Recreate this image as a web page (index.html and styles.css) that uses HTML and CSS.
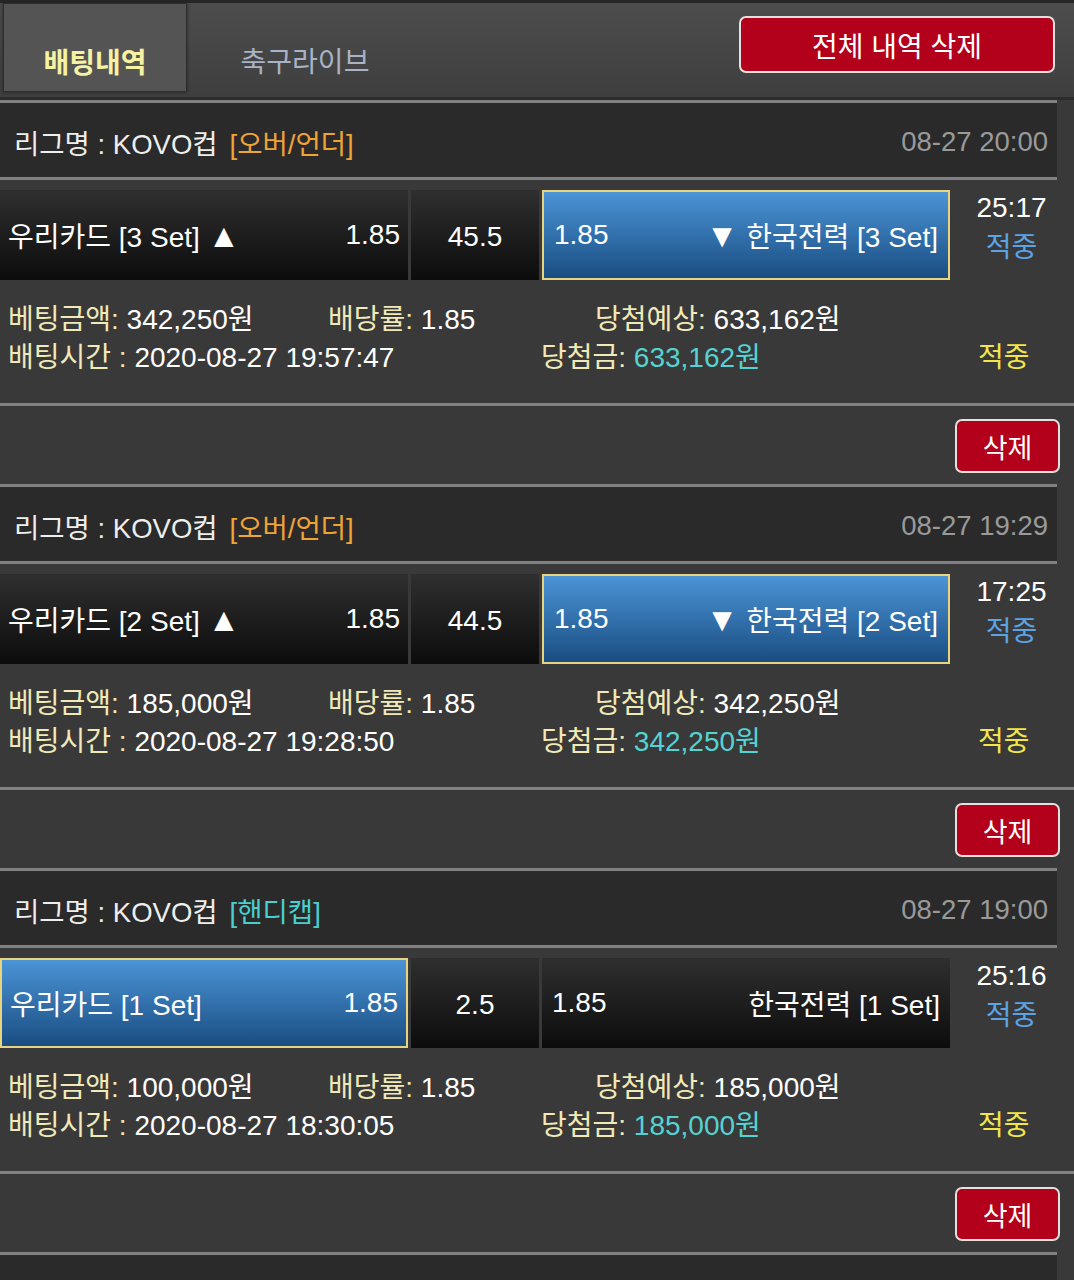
FILE: index.html
```html
<!DOCTYPE html>
<html lang="ko">
<head>
    <meta charset="UTF-8">
    <meta name="viewport" content="width=device-width, initial-scale=1.0">
    <title>배팅내역</title>
    <link rel="stylesheet" href="styles.css">
</head>
<body>
    <div class="topbar">
        <div class="tab active">배팅내역</div>
        <div class="tab">축구라이브</div>
        <button class="btn-clear">전체 내역 삭제</button>
    </div>

    <div class="bet">
        <div class="league">
            <span class="league-name">리그명 : KOVO컵</span>
            <span class="tag over">[오버/언더]</span>
            <span class="date">08-27 20:00</span>
        </div>
        <div class="match">
            <div class="cell side home"><span>우리카드 [3 Set] <i>▲</i></span><span>1.85</span></div>
            <div class="cell mid">45.5</div>
            <div class="cell side away picked"><span>1.85</span><span><i>▼</i> 한국전력 [3 Set]</span></div>
            <div class="clock"><span>25:17</span><span class="hit-blue">적중</span></div>
        </div>
        <div class="info">
            <div class="row">
                <span class="c1"><em>베팅금액:</em> 342,250원</span>
                <span class="c2"><em>배당률:</em> 1.85</span>
                <span class="c3"><em>당첨예상:</em> 633,162원</span>
            </div>
            <div class="row">
                <span class="d1"><em>배팅시간 :</em> 2020-08-27 19:57:47</span>
                <span class="d2"><em>당첨금:</em> <b>633,162원</b></span>
                <span class="d3">적중</span>
            </div>
        </div>
        <div class="actions"><button class="btn-del">삭제</button></div>
    </div>

    <div class="bet">
        <div class="league">
            <span class="league-name">리그명 : KOVO컵</span>
            <span class="tag over">[오버/언더]</span>
            <span class="date">08-27 19:29</span>
        </div>
        <div class="match">
            <div class="cell side home"><span>우리카드 [2 Set] <i>▲</i></span><span>1.85</span></div>
            <div class="cell mid">44.5</div>
            <div class="cell side away picked"><span>1.85</span><span><i>▼</i> 한국전력 [2 Set]</span></div>
            <div class="clock"><span>17:25</span><span class="hit-blue">적중</span></div>
        </div>
        <div class="info">
            <div class="row">
                <span class="c1"><em>베팅금액:</em> 185,000원</span>
                <span class="c2"><em>배당률:</em> 1.85</span>
                <span class="c3"><em>당첨예상:</em> 342,250원</span>
            </div>
            <div class="row">
                <span class="d1"><em>배팅시간 :</em> 2020-08-27 19:28:50</span>
                <span class="d2"><em>당첨금:</em> <b>342,250원</b></span>
                <span class="d3">적중</span>
            </div>
        </div>
        <div class="actions"><button class="btn-del">삭제</button></div>
    </div>

    <div class="bet">
        <div class="league">
            <span class="league-name">리그명 : KOVO컵</span>
            <span class="tag handi">[핸디캡]</span>
            <span class="date">08-27 19:00</span>
        </div>
        <div class="match">
            <div class="cell side home picked"><span>우리카드 [1 Set]</span><span>1.85</span></div>
            <div class="cell mid">2.5</div>
            <div class="cell side away"><span>1.85</span><span>한국전력 [1 Set]</span></div>
            <div class="clock"><span>25:16</span><span class="hit-blue">적중</span></div>
        </div>
        <div class="info">
            <div class="row">
                <span class="c1"><em>베팅금액:</em> 100,000원</span>
                <span class="c2"><em>배당률:</em> 1.85</span>
                <span class="c3"><em>당첨예상:</em> 185,000원</span>
            </div>
            <div class="row">
                <span class="d1"><em>배팅시간 :</em> 2020-08-27 18:30:05</span>
                <span class="d2"><em>당첨금:</em> <b>185,000원</b></span>
                <span class="d3">적중</span>
            </div>
        </div>
        <div class="actions"><button class="btn-del">삭제</button></div>
    </div>

    <div class="league empty"></div>
</body>
</html>
```

FILE: styles.css
```css
body {
    margin: 0;
    background: #393939;
    color: #fff;
    font-family: "Liberation Sans", "Noto Sans CJK KR", sans-serif;
    font-size: 28px;
}
button {
    font-family: inherit;
    cursor: pointer;
}

/* 상단 탭 */
.topbar {
    display: flex;
    align-items: flex-start;
    height: 97px;
    border-top: 3px solid #262626;
    background: linear-gradient(#4d4d4d, #3e3e3e);
    box-shadow: inset 0 -3px 0 #2c2c2c;
}
.tab {
    width: 236px;
    height: 89px;
    padding-top: 38px;
    box-sizing: border-box;
    line-height: 44px;
    text-align: center;
    font-size: 28px;
    color: #a9b3c6;
}
.tab.active {
    width: 184px;
    margin-left: 3px;
    background: #545454;
    border: 1px solid #2e2e2e;
    box-shadow: 0 0 3px #222;
    color: #f6f2a2;
    font-weight: bold;
}
.btn-clear {
    margin: 13px 19px 0 auto;
    width: 316px;
    height: 57px;
    background: #b3001b;
    border: 2px solid #e6e0e0;
    border-radius: 7px;
    color: #fff;
    font-size: 28px;
}

/* 리그 헤더 */
.league {
    display: flex;
    align-items: center;
    height: 80px;
    margin-right: 17px;
    padding: 3px 9px 0 14px;
    box-sizing: border-box;
    background: #2a2a2a;
    border-top: 3px solid #818181;
    border-bottom: 3px solid #818181;
    font-size: 27.5px;
}
.league-name { color: #eee; }
.tag { margin-left: 12px; }
.tag.over { color: #f0a336; }
.tag.handi { color: #48d0d0; }
.date {
    margin-left: auto;
    color: #9a9a9a;
}

/* 경기 행 */
.match {
    display: flex;
    gap: 3px;
    padding-top: 10px;
}
.cell {
    height: 90px;
    box-sizing: border-box;
    display: flex;
    align-items: center;
    background: linear-gradient(#2f2f2f, #0c0c0c);
}
.cell i {
    font-style: normal;
    font-size: 33px;
    line-height: 1;
}
.side {
    width: 408px;
    justify-content: space-between;
    padding: 0 8px;
}
.mid {
    width: 128px;
    justify-content: center;
    padding-top: 4px;
}
.away {
    width: 408px;
    padding: 0 10px;
}
.picked {
    background: linear-gradient(#4b94d6, #1a4d82);
    border: 2px solid #e8d47e;
}
.clock {
    width: 117px;
    margin-top: -2px;
    display: flex;
    flex-direction: column;
    align-items: center;
    line-height: 40px;
}
.hit-blue { color: #5aa4e6; }

/* 베팅 정보 */
.info {
    padding: 21px 0 26px 8px;
    border-bottom: 3px solid #818181;
    line-height: 38px;
}
.info .row { display: flex; }
.info em {
    font-style: normal;
    color: #f2e9b8;
}
.c1 { width: 320px; }
.c2 { width: 267px; }
.d1 { width: 533px; }
.d2 { width: 437px; }
.d2 b {
    font-weight: normal;
    color: #55d3d3;
}
.d3 { color: #f2e64a; }

.actions {
    display: flex;
    justify-content: flex-end;
    height: 78px;
}
.btn-del {
    margin: 13px 14px 0 0;
    width: 105px;
    height: 54px;
    background: #b3001b;
    border: 2px solid #e6e0e0;
    border-radius: 7px;
    color: #fff;
    font-size: 27px;
}
.league.empty { border-bottom: none; }
```
